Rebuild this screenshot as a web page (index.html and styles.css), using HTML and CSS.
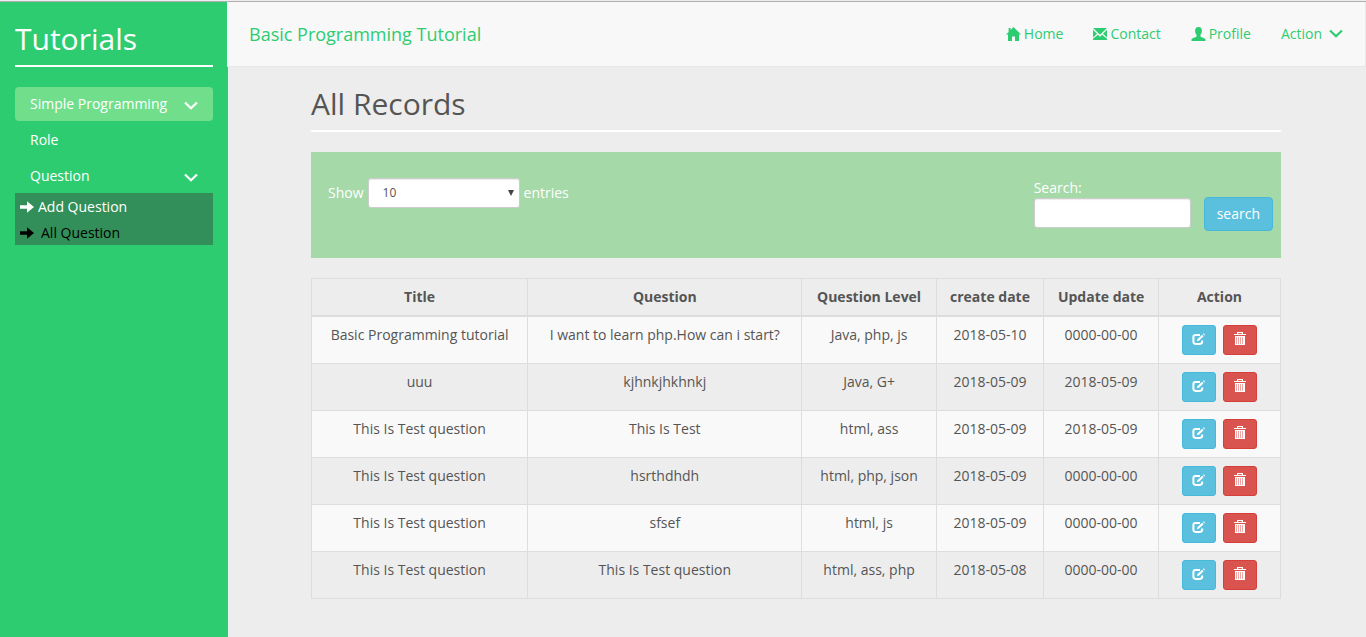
FILE: index.html
```html
<!DOCTYPE html>
<html lang="en">
<head>
<meta charset="utf-8">
<title>Basic Programming Tutorial</title>
<link rel="stylesheet" href="styles.css">
</head>
<body>
<svg class="sprite" aria-hidden="true">
  <symbol id="home" viewBox="0 0 15 14"><path d="M7.5 0 15 7.6H13V14H9V9.5H6V14H2V7.6H0L2.6 4.9V1H4.6V2.9Z"/></symbol>
  <symbol id="mail" viewBox="0 0 14 12"><path d="M0 0H14L7 6.8ZM0 1.8 4 5.8 0 9.4ZM14 1.8V9.4L10 5.8ZM0 12V10.8L4.9 6.7 7 8.7 9.1 6.7 14 10.8V12Z"/></symbol>
  <symbol id="user" viewBox="0 0 14 14"><path d="M7 0C9.4 0 10.4 1.5 10.4 3.8 10.4 6 9.6 7 9 7.8V9.4C9.4 10.4 14 10.8 14 12.6V14H0V12.6C0 10.8 4.6 10.4 5 9.4V7.8C4.4 7 3.6 6 3.6 3.8 3.6 1.5 4.6 0 7 0Z"/></symbol>
  <symbol id="chevron" viewBox="0 0 14 9"><path d="M1 1.5 7 7.3 13 1.5" fill="none" stroke="currentColor" stroke-width="2.2"/></symbol>
  <symbol id="arrow" viewBox="0 0 14 12"><path d="M0 4.3H7V.3L14 6 7 11.7V7.7H0Z"/></symbol>
  <symbol id="edit" viewBox="0 0 13 12"><path d="M8 1.9H3.6Q1.4 1.9 1.4 4V8.6Q1.4 10.9 3.6 10.9H7.9Q10.2 10.9 10.2 8.6V7.4" fill="none" stroke="currentColor" stroke-width="2"/><path d="M10.1 1.7 11.6 3.2 7.2 7.6 4.8 8.3 5.6 5.9ZM11 .9 11.7.3 13 1.5 12.3 2.4Z"/></symbol>
  <symbol id="trash" viewBox="0 0 12 13"><path d="M3 2V0H9V2H12V3H0V2ZM4.2 1.1V2H7.8V1.1Z" fill-rule="evenodd"/><path d="M1 4H11V13H1ZM2.4 5V12H2.9V5ZM4.4 5V12H4.9V5ZM6.4 5V12H6.9V5ZM8.4 5V12H8.9V5Z" fill-rule="evenodd"/></symbol>
</svg>
<div class="page">
  <aside class="sidebar">
    <h1 class="heading">Tutorials</h1>
    <nav class="menu">
      <a class="menu-item active" href="#">Simple Programming <svg class="icon chevron"><use href="#chevron"/></svg></a>
      <a class="menu-item" href="#">Role</a>
      <a class="menu-item" href="#">Question <svg class="icon chevron"><use href="#chevron"/></svg></a>
      <div class="submenu">
        <a class="submenu-item" href="#"><svg class="icon arrow"><use href="#arrow"/></svg>Add Question</a>
        <a class="submenu-item current" href="#"><svg class="icon arrow"><use href="#arrow"/></svg>All Question</a>
      </div>
    </nav>
  </aside>
  <div class="main">
    <header class="navbar">
      <a class="brand" href="#">Basic Programming Tutorial</a>
      <nav class="links">
        <a class="link" href="#"><svg class="icon home"><use href="#home"/></svg>Home</a>
        <a class="link" href="#"><svg class="icon mail"><use href="#mail"/></svg>Contact</a>
        <a class="link" href="#"><svg class="icon user"><use href="#user"/></svg>Profile</a>
        <a class="link dropdown" href="#">Action<svg class="icon chevron"><use href="#chevron"/></svg></a>
      </nav>
    </header>
    <main class="content">
      <h2 class="heading">All Records</h2>
      <form class="filters">
        <div class="length">
          <label for="length">Show</label>
          <span class="select-box">
            <select class="field" id="length"><option>10</option><option>25</option><option>50</option></select>
            <svg class="caret" viewBox="0 0 6 6"><path d="M0 0H6L3 6Z"/></svg>
          </span>
          <label for="length">entries</label>
        </div>
        <div class="search">
          <div class="search-box">
            <label for="search">Search:</label>
            <input class="field" id="search" type="text">
          </div>
          <button class="btn info" type="button">search</button>
        </div>
      </form>
      <table class="records">
        <thead>
          <tr><th>Title</th><th>Question</th><th>Question Level</th><th>create date</th><th>Update date</th><th>Action</th></tr>
        </thead>
        <tbody>
          <tr><td>Basic Programming tutorial</td><td>I want to learn php.How can i start?</td><td>Java, php, js</td><td>2018-05-10</td><td>0000-00-00</td><td><div class="actions"><button class="btn small info" type="button" aria-label="Edit"><svg class="icon edit"><use href="#edit"/></svg></button><button class="btn small danger" type="button" aria-label="Delete"><svg class="icon trash"><use href="#trash"/></svg></button></div></td></tr>
          <tr><td>uuu</td><td>kjhnkjhkhnkj</td><td>Java, G+</td><td>2018-05-09</td><td>2018-05-09</td><td><div class="actions"><button class="btn small info" type="button" aria-label="Edit"><svg class="icon edit"><use href="#edit"/></svg></button><button class="btn small danger" type="button" aria-label="Delete"><svg class="icon trash"><use href="#trash"/></svg></button></div></td></tr>
          <tr><td>This Is Test question</td><td>This Is Test</td><td>html, ass</td><td>2018-05-09</td><td>2018-05-09</td><td><div class="actions"><button class="btn small info" type="button" aria-label="Edit"><svg class="icon edit"><use href="#edit"/></svg></button><button class="btn small danger" type="button" aria-label="Delete"><svg class="icon trash"><use href="#trash"/></svg></button></div></td></tr>
          <tr><td>This Is Test question</td><td>hsrthdhdh</td><td>html, php, json</td><td>2018-05-09</td><td>0000-00-00</td><td><div class="actions"><button class="btn small info" type="button" aria-label="Edit"><svg class="icon edit"><use href="#edit"/></svg></button><button class="btn small danger" type="button" aria-label="Delete"><svg class="icon trash"><use href="#trash"/></svg></button></div></td></tr>
          <tr><td>This Is Test question</td><td>sfsef</td><td>html, js</td><td>2018-05-09</td><td>0000-00-00</td><td><div class="actions"><button class="btn small info" type="button" aria-label="Edit"><svg class="icon edit"><use href="#edit"/></svg></button><button class="btn small danger" type="button" aria-label="Delete"><svg class="icon trash"><use href="#trash"/></svg></button></div></td></tr>
          <tr><td>This Is Test question</td><td>This Is Test question</td><td>html, ass, php</td><td>2018-05-08</td><td>0000-00-00</td><td><div class="actions"><button class="btn small info" type="button" aria-label="Edit"><svg class="icon edit"><use href="#edit"/></svg></button><button class="btn small danger" type="button" aria-label="Delete"><svg class="icon trash"><use href="#trash"/></svg></button></div></td></tr>
        </tbody>
      </table>
    </main>
  </div>
</div>
</body>
</html>
```
FILE: styles.css
```css
* { box-sizing: border-box; }

body {
  margin: 0;
  background: #ededed;
  color: #555;
  font: 14px/20px "Open Sans", sans-serif;
}

a { color: inherit; text-decoration: none; }

.sprite { display: none; }

.icon { display: block; flex: none; fill: currentColor; }
.home { width: 15px; height: 14px; }
.user { width: 15px; height: 14px; }
.mail { width: 14px; height: 12px; }
.arrow { width: 14px; height: 12px; }
.chevron { width: 14px; height: 9px; }
.edit { width: 13px; height: 12px; }
.trash { width: 12px; height: 13px; }

.page {
  display: flex;
  min-height: calc(100vh - 1px);
  margin-top: 1px;
  border-top: 1px solid #b0b0b0;
}

.sidebar {
  flex: none;
  width: 228px;
  padding: 0 15px;
  background: #2ecc71;
  color: #fff;
}

.heading {
  margin: 0 0 20px;
  padding: 20px 0 9px;
  border-bottom: 2px solid #fff;
  font-size: 30px;
  line-height: 34px;
  font-weight: 400;
}

.menu { display: flex; flex-direction: column; gap: 2px; }

.menu-item {
  display: flex;
  align-items: center;
  justify-content: space-between;
  height: 34px;
  padding: 0 15px;
  border-radius: 4px;
}
.menu-item.active { background: #70de8b; }
.menu-item .chevron { margin-top: 2px; }

.submenu { margin-top: -2px; background: #328f59; }
.submenu-item { display: flex; align-items: center; gap: 4px; height: 26px; padding: 2px 5px 0; }
.submenu-item.current { gap: 7px; color: #000; }

.main { flex: 1; min-width: 0; }

.navbar {
  display: flex;
  align-items: center;
  justify-content: space-between;
  height: 65px;
  margin-left: -1px;
  padding: 0 22px;
  border: solid #e7e7e7;
  border-width: 0 1px 1px 0;
  background: #f8f8f8;
  color: #2ecc71;
}
.brand { font-size: 18px; }
.links { display: flex; gap: 30px; }
.link { display: flex; align-items: center; gap: 3px; }
.dropdown { gap: 7px; }
.dropdown .chevron { margin-bottom: 2px; }

.content { padding: 0 85px 30px 83px; }

.filters {
  display: flex;
  justify-content: space-between;
  min-height: 106px;
  margin-bottom: 20px;
  padding: 26px 8px 26px 17px;
  background: #a5d9a8;
  color: #fff;
}
.length { display: flex; align-items: center; gap: 4px; height: 30px; }
.select-box { position: relative; display: flex; }
.caret { position: absolute; top: 12px; right: 6px; width: 6px; height: 6px; fill: #444; }

.field {
  height: 30px;
  padding: 5px 14px;
  border: 1px solid #ccc;
  border-radius: 3px;
  background: #fff;
  box-shadow: inset 0 1px 1px rgba(0, 0, 0, .08);
  color: #555;
  font: 12px/18px "Open Sans", sans-serif;
  appearance: none;
}
select.field { width: 152px; }
.search { display: flex; align-items: flex-end; gap: 13px; height: 53px; }
.search-box { display: flex; flex-direction: column; margin-bottom: 3px; }
input.field { width: 157px; }

.btn {
  height: 34px;
  padding: 0 12px;
  border: 1px solid;
  border-radius: 4px;
  color: #fff;
  font: 14px/20px "Open Sans", sans-serif;
}
.info { border-color: #46b8da; background: #5bc0de; }
.danger { border-color: #d43f3a; background: #d9534f; }
.small {
  display: flex;
  align-items: center;
  justify-content: center;
  width: 34px;
  height: 30px;
  padding: 0 0 2px;
  border-radius: 3px;
}
.small .trash { margin-bottom: 1px; }

.records {
  width: 100%;
  border-collapse: collapse;
  text-align: center;
}
.records th, .records td { padding: 8px; border: 1px solid #ddd; vertical-align: top; }
.records th { border-bottom-width: 2px; font-weight: 700; }
.records tbody tr:nth-child(odd) { background: #f9f9f9; }
.actions { display: flex; justify-content: center; gap: 7px; padding: 0 9px; }
```
